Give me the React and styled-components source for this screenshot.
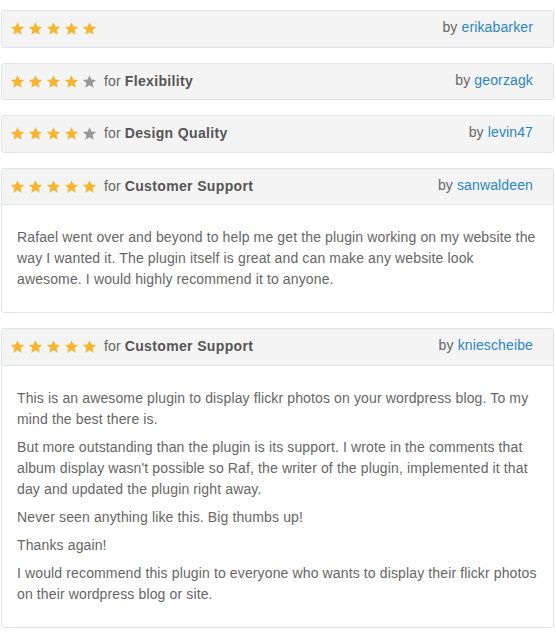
import React from "react";
import styled, { createGlobalStyle } from "styled-components";

const reviews = [
  { rating: 5, user: "erikabarker" },
  { rating: 4, topic: "Flexibility", user: "georzagk" },
  { rating: 4, topic: "Design Quality", user: "levin47" },
  {
    rating: 5,
    topic: "Customer Support",
    user: "sanwaldeen",
    text: [
      "Rafael went over and beyond to help me get the plugin working on my website the way I wanted it. The plugin itself is great and can make any website look awesome. I would highly recommend it to anyone.",
    ],
  },
  {
    rating: 5,
    topic: "Customer Support",
    user: "kniescheibe",
    text: [
      "This is an awesome plugin to display flickr photos on your wordpress blog. To my mind the best there is.",
      "But more outstanding than the plugin is its support. I wrote in the comments that album display wasn't possible so Raf, the writer of the plugin, implemented it that day and updated the plugin right away.",
      "Never seen anything like this. Big thumbs up!",
      "Thanks again!",
      "I would recommend this plugin to everyone who wants to display their flickr photos on their wordpress blog or site.",
    ],
  },
];

function Star({ filled }) {
  return (
    <StarIcon viewBox="0 0 24 24" $filled={filled}>
      <path d="M12 1.8l3.1 7.1 7.6.6-5.8 5 1.8 7.6L12 18.1l-6.7 4 1.8-7.6-5.8-5 7.6-.6z" />
    </StarIcon>
  );
}

function App() {
  return (
    <>
      <GlobalStyle />
      <List>
        {reviews.map((r, i) => (
          <Card key={i}>
            <Header $hasBody={!!r.text}>
              <Left>
                <Stars>
                  {[1, 2, 3, 4, 5].map((n) => (
                    <Star key={n} filled={n <= r.rating} />
                  ))}
                </Stars>
                {r.topic && (
                  <Topic>
                    for <b>{r.topic}</b>
                  </Topic>
                )}
              </Left>
              <Author>
                by <a href="#">{r.user}</a>
              </Author>
            </Header>
            {r.text && (
              <Body>
                {r.text.map((p, j) => (
                  <p key={j}>{p}</p>
                ))}
              </Body>
            )}
          </Card>
        ))}
      </List>
    </>
  );
}

const GlobalStyle = createGlobalStyle`
  body {
    margin: 0;
    background: #ffffff;
    font-family: "Liberation Sans", Arial, sans-serif;
    font-size: 14px;
    letter-spacing: 0.13px;
    color: #666;
  }
`;

const List = styled.div`
  display: flex;
  flex-direction: column;
  gap: 15px;
  padding: 10px 2px 10px 1px;
`;

const Card = styled.div`
  border: 1px solid #e0e4e8;
  border-radius: 3px;
  background: #ffffff;
  overflow: hidden;
`;

const Header = styled.div`
  display: flex;
  align-items: center;
  justify-content: space-between;
  background: #f4f4f4;
  padding: 8px 20px 8px 8px;
  line-height: 19.5px;
  min-height: 19.5px;
  border-bottom: ${(p) => (p.$hasBody ? "1px solid #e0e4e8" : "none")};
`;

const Left = styled.div`
  display: flex;
  align-items: center;
`;

const Stars = styled.div`
  display: flex;
  gap: 3px;
  margin-right: 7px;
`;

const StarIcon = styled.svg`
  width: 15px;
  height: 15px;
  fill: ${(p) => (p.$filled ? "#f6b52d" : "#999999")};
`;

const Topic = styled.span`
  color: #666;
  b {
    color: #555;
    font-weight: bold;
    letter-spacing: 0.35px;
  }
`;

const Author = styled.span`
  color: #666;
  margin-top: -2px;
  a {
    color: #2a86c4;
    text-decoration: none;
  }
`;

const Body = styled.div`
  padding: 15px 14px 15px 15px;
  line-height: 21px;
  color: #666;
  p {
    margin: 7px 0;
  }
`;

export default App;
